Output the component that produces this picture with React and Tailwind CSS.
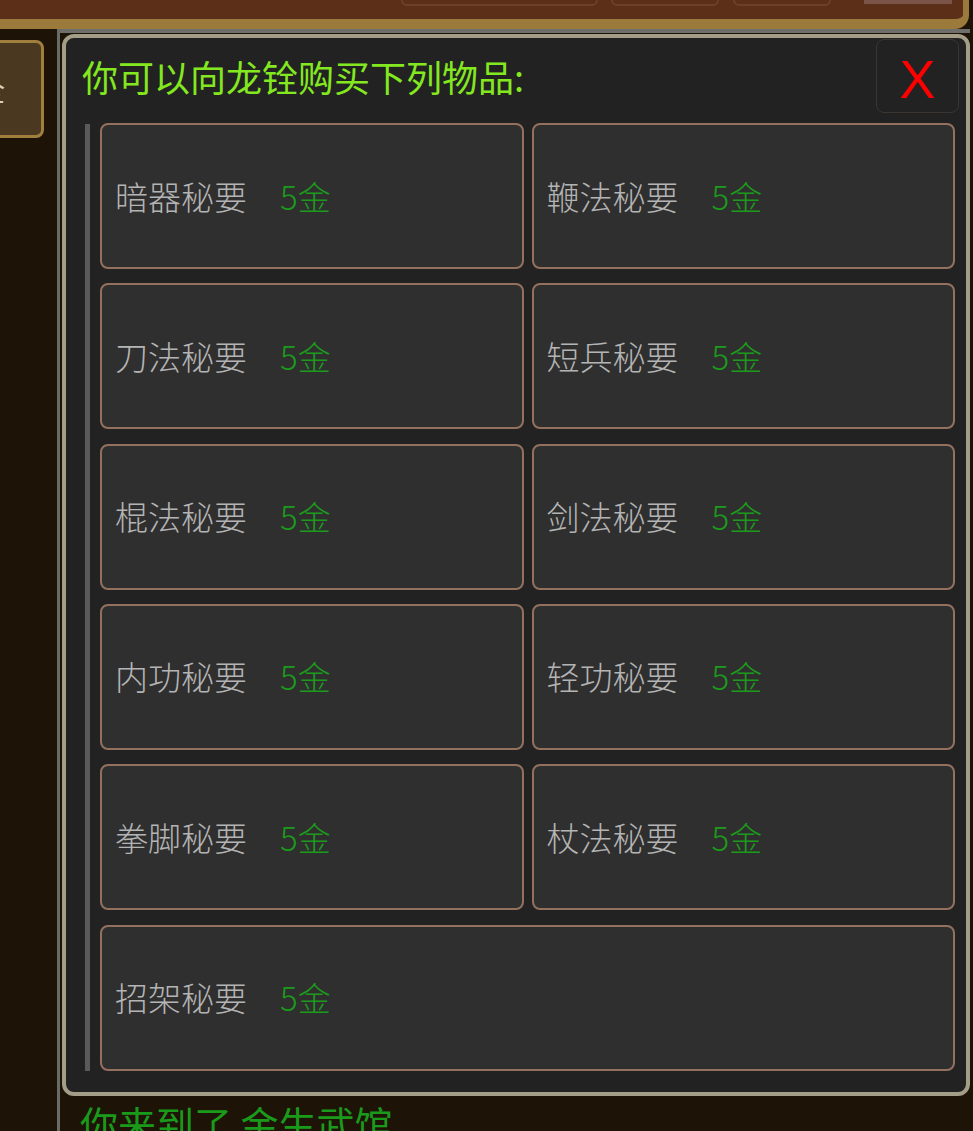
import React from 'react';

const items = [
  ['暗器秘要', '5金'],
  ['鞭法秘要', '5金'],
  ['刀法秘要', '5金'],
  ['短兵秘要', '5金'],
  ['棍法秘要', '5金'],
  ['剑法秘要', '5金'],
  ['内功秘要', '5金'],
  ['轻功秘要', '5金'],
  ['拳脚秘要', '5金'],
  ['杖法秘要', '5金'],
];

const font = { fontFamily: '"Noto Sans CJK SC", "Noto Sans", sans-serif' };

function ShopItem({ name, price, wide }) {
  return (
    <div
      className={`h-[146px] rounded-[8px] border-[2.5px] border-[#94705e] bg-[#2f2f2f] flex items-center pl-[13px] ${wide ? 'col-span-2' : ''}`}
    >
      <span className="text-[33px] text-[#b4b4b4] w-[165px] leading-none font-light">{name}</span>
      <span className="text-[33px] text-[#1c9a1c] leading-none font-light">{price}</span>
    </div>
  );
}

function App() {
  return (
    <div className="w-[973px] h-[1131px] overflow-hidden bg-[#1e1307] flex flex-col" style={font}>
      {/* top bar */}
      <div className="h-[29px] flex shrink-0">
        <div className="flex-1 bg-[#5c2f18] border-b-[10px] border-r-[6px] border-[#9c7a3c] rounded-br-[14px] mr-[4px] relative">
          <div className="absolute top-[-10px] left-[401px] w-[197px] h-[16px] rounded-b-[6px] border-2 border-[#6e4028]" />
          <div className="absolute top-[-10px] left-[611px] w-[108px] h-[16px] rounded-b-[6px] border-2 border-[#6e4028]" />
          <div className="absolute top-[-10px] left-[733px] w-[98px] h-[16px] rounded-b-[6px] border-2 border-[#6e4028]" />
          <div className="absolute top-0 left-[864px] w-[88px] h-[4px] bg-[#7a5446]" />
        </div>
      </div>

      <div className="flex flex-1 min-h-0">
        {/* left column */}
        <div className="w-[57px] shrink-0 pt-[11px]">
          <div className="-ml-[30px] w-[74px] h-[98px] rounded-[8px] border-[3px] border-[#a07e3e] bg-[#4a3920] flex items-center justify-end pr-[36px]">
            <span className="text-[28px] text-[#d8d0c0] leading-none">全</span>
          </div>
        </div>
        <div className="w-[3px] bg-[#6a6a66] shrink-0" />

        {/* main */}
        <div className="flex-1 flex flex-col min-w-0">
          <div className="h-[4px] bg-[#6e6e6a] mr-[3px] shrink-0" />
          <div className="ml-[2px] mr-[3px] mt-[1px] h-[1062px] shrink-0 rounded-[12px] border-[4px] border-[#a49e88] bg-[#222222] flex flex-col">
            <div className="h-[82px] flex items-start shrink-0">
              <div className="flex-1 pl-[16px] pt-[20px] text-[36px] leading-none text-[#84e820]">
                你可以向龙铨购买下列物品:
              </div>
              <div className="mt-[1px] mr-[7px] w-[83px] h-[74px] rounded-[8px] border border-[#3c3632] bg-[#222222] flex items-center justify-center pt-[6px]">
                <span className="text-[54px] text-[#ff0000] leading-none" style={{ fontFamily: '"Liberation Sans", Arial, sans-serif' }}>X</span>
              </div>
            </div>

            <div className="flex mt-[3px]">
              <div className="ml-[19px] w-[5px] bg-[#5a5a5a] h-[947px] mt-[1px] shrink-0" />
              <div className="flex-1 ml-[10px] mr-[11px] grid grid-cols-2 gap-x-[8px] gap-y-[14px]">
                {items.map(([n, p]) => (
                  <ShopItem key={n} name={n} price={p} />
                ))}
                <ShopItem name="招架秘要" price="5金" wide />
              </div>
            </div>
          </div>
          <div className="pl-[20px] pt-[8px] text-[38px] leading-none text-[#1a9a1a] whitespace-nowrap">
            你来到了 金生武馆
          </div>
        </div>
      </div>
    </div>
  );
}

export default App;
